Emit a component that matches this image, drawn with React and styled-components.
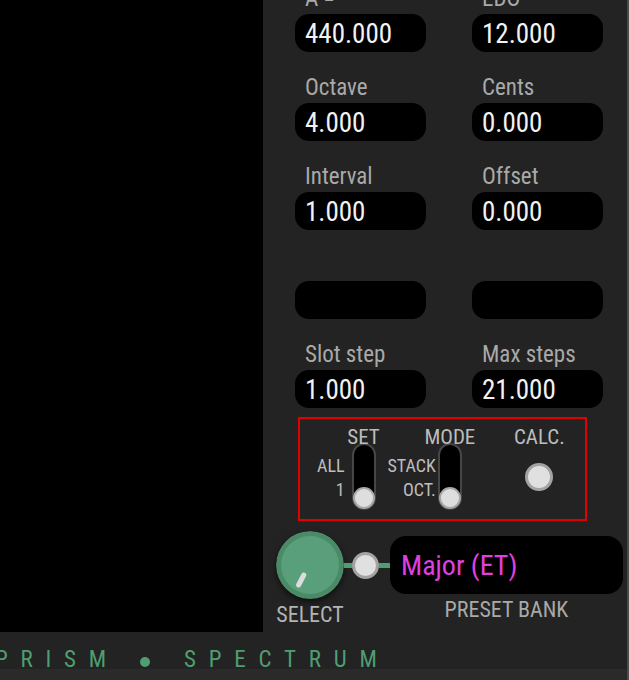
import React from "react";
import styled, { createGlobalStyle } from "styled-components";

const GlobalStyle = createGlobalStyle`
  html, body {
    margin: 0;
    padding: 0;
    background: #232323;
  }
  body {
    font-family: Roboto, "Liberation Sans", sans-serif;
    font-stretch: 87.5%;
  }
`;

const Page = styled.div`
  width: 629px;
  height: 680px;
  box-sizing: border-box;
  border-right: 2px solid #4b4b4b;
  display: flex;
  flex-direction: column;
  overflow: hidden;
  background: #232323;
`;

const Main = styled.div`
  display: flex;
  height: 632px;
  flex-shrink: 0;
`;

const Screen = styled.div`
  width: 263px;
  background: #000;
`;

const Panel = styled.div`
  flex: 1;
  display: flex;
  flex-direction: column;
  padding-left: 32px;
`;

const FieldGrid = styled.div`
  margin-top: -13px;
  display: grid;
  grid-template-columns: 131px 131px;
  column-gap: 46px;
  row-gap: 24px;
`;

const Field = styled.div`
  display: flex;
  flex-direction: column;
`;

const FieldLabel = styled.div`
  height: 24px;
  line-height: 24px;
  margin-bottom: 3px;
  padding-left: 10px;
  font-size: 23px;
  color: #a9a9a9;
`;

const ValueBox = styled.div`
  height: 38px;
  line-height: 40px;
  border-radius: 14px;
  background: #000;
  padding-left: 10px;
  font-size: 27px;
  color: #f2f2f2;
  overflow: hidden;
`;

const SwitchBox = styled.div`
  margin-top: 9px;
  margin-left: 3px;
  width: 289px;
  height: 104px;
  box-sizing: border-box;
  border: 2px solid #e30000;
  display: flex;
  align-items: flex-start;
  padding: 10px 0 0 17px;
`;

const SwitchGroup = styled.div`
  display: flex;
  align-items: flex-end;
  gap: ${(p) => p.gap}px;
  margin-left: ${(p) => p.offset || 0}px;
`;

const SideLabels = styled.div`
  display: flex;
  flex-direction: column;
  align-items: flex-end;
  margin-bottom: 8px;
  font-size: 18px;
  line-height: 24px;
  color: #bdbdbd;
`;

const TrackColumn = styled.div`
  width: 24px;
  display: flex;
  flex-direction: column;
  align-items: center;
`;

const SmallTitle = styled.div`
  font-size: 21px;
  line-height: 16px;
  height: 16px;
  color: #bdbdbd;
  white-space: nowrap;
  position: relative;
  z-index: 1;
`;

const Track = styled.div`
  margin-top: -2px;
  width: 24px;
  height: 67px;
  box-sizing: border-box;
  border: 2px solid #464646;
  border-radius: 12px;
  background: #000;
  display: flex;
  flex-direction: column;
  justify-content: flex-end;
  align-items: center;
`;

const Thumb = styled.div`
  width: 22px;
  height: 22px;
  flex-shrink: 0;
  margin-bottom: -1px;
  box-sizing: border-box;
  border-radius: 50%;
  background: #dedede;
  border: 2px solid #a8a8a8;
`;

const CalcGroup = styled.div`
  margin-left: 51px;
  width: 53px;
  display: flex;
  flex-direction: column;
  align-items: center;
`;

const Button = styled.div`
  margin-top: ${(p) => p.top || 0}px;
  width: ${(p) => p.size}px;
  height: ${(p) => p.size}px;
  flex-shrink: 0;
  box-sizing: border-box;
  border-radius: 50%;
  background: #e0e0e0;
  border: 3px solid #a3a3a3;
`;

const BottomRow = styled.div`
  margin-top: 10px;
  margin-left: -19px;
  display: flex;
  align-items: flex-start;
`;

const KnobColumn = styled.div`
  width: 68px;
  display: flex;
  flex-direction: column;
  align-items: center;
`;

const KnobFace = styled.svg`
  display: block;
  border-radius: 50%;
  box-shadow: 0 3px 6px rgba(0, 0, 0, 0.55);
`;

const Caption = styled.div`
  margin-top: 4px;
  font-size: 22px;
  line-height: 24px;
  color: ${(p) => p.color || "#b4b4b4"};
  white-space: nowrap;
`;

const Connector = styled.div`
  height: 68px;
  display: flex;
  align-items: center;
`;

const Wire = styled.div`
  width: ${(p) => p.length}px;
  height: 5px;
  background: #4f9e72;
`;

const PresetColumn = styled.div`
  margin-top: 5px;
  display: flex;
  flex-direction: column;
  align-items: center;
`;

const PresetBox = styled.div`
  width: 233px;
  height: 58px;
  border-radius: 16px;
  background: #000;
  display: flex;
  align-items: center;
  padding-left: 11px;
  box-sizing: border-box;
  font-size: 28px;
  color: #e040e0;
`;

const Footer = styled.div`
  height: 37px;
  flex-shrink: 0;
  box-sizing: border-box;
  padding-top: 19px;
  display: flex;
  align-items: flex-start;
  font-size: 23px;
  line-height: 18px;
  letter-spacing: 12.8px;
  color: #4f9e72;
  white-space: nowrap;
`;

const Word = styled.span`
  margin-left: ${(p) => p.shift || 0}px;
`;

const Dot = styled.span`
  width: 10px;
  height: 10px;
  margin: 6px 34px 0 21px;
  border-radius: 50%;
  background: #4f9e72;
  flex-shrink: 0;
`;

const Strip = styled.div`
  height: 11px;
  flex-shrink: 0;
  background: #2a2a2a;
`;

const fields = [
  ["A =", "440.000"],
  ["EDO", "12.000"],
  ["Octave", "4.000"],
  ["Cents", "0.000"],
  ["Interval", "1.000"],
  ["Offset", "0.000"],
  ["", ""],
  ["", ""],
  ["Slot step", "1.000"],
  ["Max steps", "21.000"],
];

const Switch = ({ title, top, bottom, gap, offset }) => (
  <SwitchGroup gap={gap} offset={offset}>
    <SideLabels>
      <span>{top}</span>
      <span>{bottom}</span>
    </SideLabels>
    <TrackColumn>
      <SmallTitle>{title}</SmallTitle>
      <Track>
        <Thumb />
      </Track>
    </TrackColumn>
  </SwitchGroup>
);

const Knob = () => (
  <KnobFace width="68" height="68" viewBox="0 0 68 68">
    <circle cx="34" cy="34" r="34" fill="#4a8a66" />
    <circle cx="34" cy="34" r="29" fill="#5a9f7b" />
    <line
      x1="27.8"
      y1="44"
      x2="22.6"
      y2="54"
      stroke="#dcdcdc"
      strokeWidth="5"
      strokeLinecap="round"
    />
  </KnobFace>
);

export default function App() {
  return (
    <>
      <GlobalStyle />
      <Page>
        <Main>
          <Screen />
          <Panel>
            <FieldGrid>
              {fields.map(([label, value], i) => (
                <Field key={i}>
                  <FieldLabel>{label}</FieldLabel>
                  <ValueBox>{value}</ValueBox>
                </Field>
              ))}
            </FieldGrid>

            <SwitchBox>
              <Switch title="SET" top="ALL" bottom="1" gap={7} />
              <Switch title="MODE" top="STACK" bottom="OCT." gap={2} offset={12} />
              <CalcGroup>
                <SmallTitle>CALC.</SmallTitle>
                <Button size={28} top={18} />
              </CalcGroup>
            </SwitchBox>

            <BottomRow>
              <KnobColumn>
                <Knob />
                <Caption>SELECT</Caption>
              </KnobColumn>
              <Connector>
                <Wire length={8} />
                <Button size={27} />
                <Wire length={11} />
              </Connector>
              <PresetColumn>
                <PresetBox>Major (ET)</PresetBox>
                <Caption color="#a9a9a9">PRESET BANK</Caption>
              </PresetColumn>
            </BottomRow>
          </Panel>
        </Main>
        <Footer>
          <Word shift={-5}>PRISM</Word>
          <Dot />
          <Word>SPECTRUM</Word>
        </Footer>
        <Strip />
      </Page>
    </>
  );
}
